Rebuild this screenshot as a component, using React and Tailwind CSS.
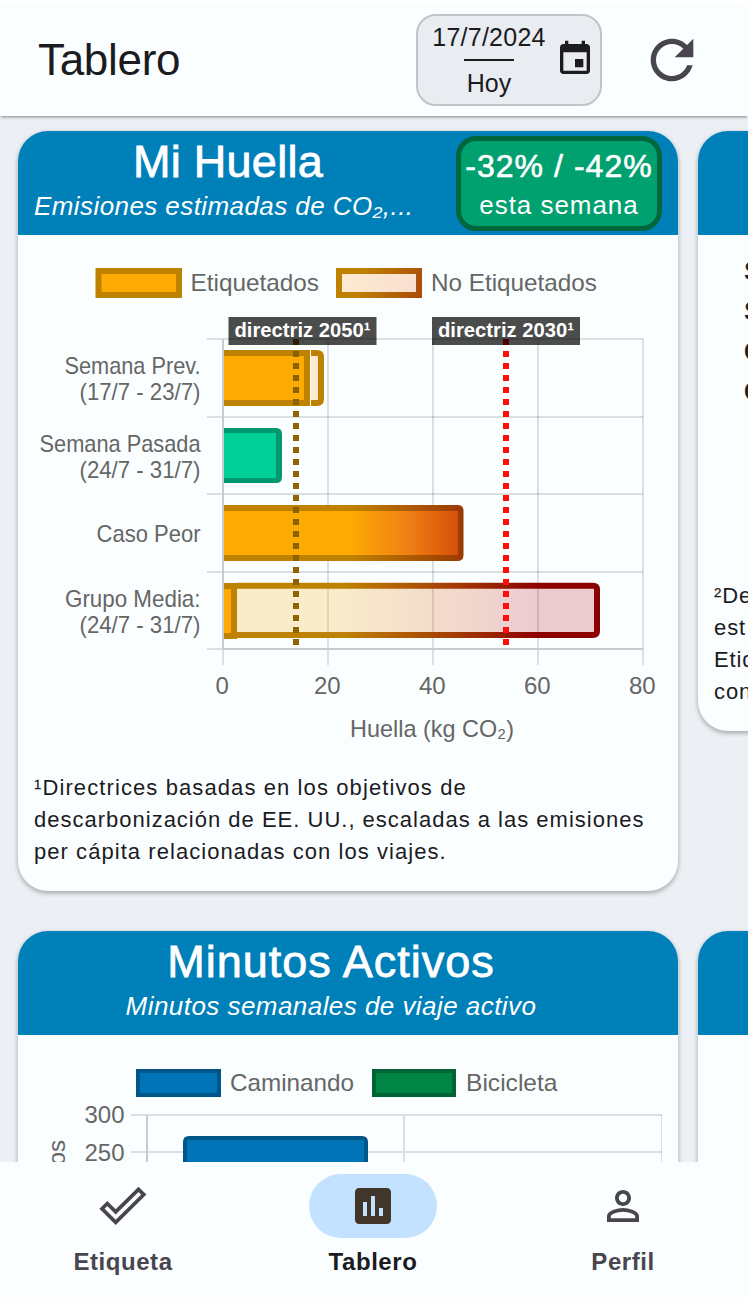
import React from "react";

const FONT = "font-['Liberation_Sans',Arial,sans-serif]";
const card = "shrink-0 overflow-hidden rounded-[30px] bg-[#fafeff] shadow-[0_2px_5px_rgba(0,0,0,0.32)]";

function T({ x, y, w, s = 24, anchor = "start", fill = "#666666", children, ...rest }) {
  return (
    <text x={x} y={y} fontSize={s} textLength={w} lengthAdjust="spacingAndGlyphs" textAnchor={anchor} fill={fill} {...rest}>
      {children}
    </text>
  );
}

function Header() {
  return (
    <header className="relative z-10 flex h-28 shrink-0 items-center bg-[#fafeff] pl-[38px] shadow-[0_2px_3px_-1px_rgba(0,0,0,0.45)]">
      <h1 className="w-[378px] text-[44px] leading-none tracking-[-0.3px] text-[#1c1b1f]">Tablero</h1>
      <button className="flex h-[92px] w-[186px] items-center rounded-[20px] border-2 border-[#c0c4c8] bg-[#e9ecf0] pl-3.5 text-[#1c1b1f]">
        <span className="flex w-[114px] flex-col items-center text-[25px] leading-[28px]">
          <span className="whitespace-nowrap tracking-[0.25px]">17/7/2024</span>
          <span className="mt-2 mb-2 h-0.5 w-[50px] bg-[#1c1b1f]" />
          <span>Hoy</span>
        </span>
        <svg className="-mt-0.5 ml-[9px]" width="40" height="40" viewBox="0 0 24 24" fill="currentColor">
          <path d="M17 12h-5v5h5v-5zM16 1v2H8V1H6v2H5c-1.110 0-1.990.9-1.990 2L3 19c0 1.100.890 2 2 2h14c1.100 0 2-.9 2-2V5c0-1.100-.9-2-2-2h-1V1h-2zm3 18H5V8h14v11z" />
        </svg>
      </button>
      <svg className="ml-[38px]" width="64" height="64" viewBox="0 0 24 24" fill="#49454f">
        <path d="M17.650 6.350C16.200 4.900 14.210 4 12 4c-4.420 0-7.990 3.580-7.990 8s3.570 8 7.990 8c3.730 0 6.840-2.550 7.730-6h-2.080c-.820 2.330-3.040 4-5.650 4-3.310 0-6-2.690-6-6s2.690-6 6-6c1.660 0 3.140.690 4.220 1.780L13 11h7V4l-2.350 2.350z" />
      </svg>
    </header>
  );
}

function FootprintChart() {
  const rows = [339, 417, 494, 572];
  return (
    <svg className="block" width="660" height="516" viewBox="18 235 660 516">
      <defs>
        <linearGradient id="legendFill"><stop offset="0" stopColor="#fdebd0" /><stop offset="1" stopColor="#f8dfd0" /></linearGradient>
        <linearGradient id="legendEdge" gradientUnits="userSpaceOnUse" x1="336" x2="422" y1="268" y2="298"><stop offset="0.3" stopColor="#bf8100" /><stop offset="1" stopColor="#a94a0b" /></linearGradient>
        <linearGradient id="worstFill" gradientUnits="userSpaceOnUse" x1="223" x2="463"><stop offset="0.53" stopColor="#fdab02" /><stop offset="0.76" stopColor="#f18215" /><stop offset="1" stopColor="#d24c06" /></linearGradient>
        <linearGradient id="worstEdge" gradientUnits="userSpaceOnUse" x1="223" x2="463"><stop offset="0.53" stopColor="#bf8100" /><stop offset="1" stopColor="#9b3904" /></linearGradient>
        <linearGradient id="groupFill" gradientUnits="userSpaceOnUse" x1="223" x2="600"><stop offset="0.3" stopColor="#f9ab0e" stopOpacity="0.22" /><stop offset="0.62" stopColor="#d65413" stopOpacity="0.22" /><stop offset="0.84" stopColor="#b80017" stopOpacity="0.2" /></linearGradient>
        <linearGradient id="groupEdge" gradientUnits="userSpaceOnUse" x1="223" x2="600"><stop offset="0.32" stopColor="#bf8100" /><stop offset="0.6" stopColor="#a53f04" /><stop offset="0.84" stopColor="#8b0000" /></linearGradient>
      </defs>
      <rect x="98.500" y="271" width="80.500" height="24" fill="#fdab02" stroke="#bf8100" strokeWidth="6" />
      <T x="190.500" y="291" w="128.500">Etiquetados</T>
      <rect x="339" y="271" width="80" height="24" fill="url(#legendFill)" stroke="url(#legendEdge)" strokeWidth="6" />
      <T x="431" y="291" w="166">No Etiquetados</T>

      <g stroke="#000" strokeOpacity="0.12" strokeWidth="2" fill="none">
        {rows.map((y) => <path key={y} d={`M207 ${y}H643`} />)}
        <path d="M207 649H223M223 649V665M328 339V665M433 339V665M538 339V665M643 339V665" />
      </g>
      <path d="M223 339V649H643" fill="none" stroke="#c8cacc" strokeWidth="2" />

      <path d="M311 353H317Q321 353 321 357V399Q321 403 317 403H311" fill="#fdebd0" stroke="#bf8100" strokeWidth="6" />
      <path d="M224 350H310V406H224Z" fill="#bf8100" /><path d="M224 356H304V400H224Z" fill="#fdab02" />
      <path d="M310.500 350V406" stroke="#fafeff" />
      <path d="M224 428H276Q282 428 282 434V477Q282 483 276 483H224Z" fill="#00996f" /><path d="M224 433H276V478H224Z" fill="#00cf97" />
      <path d="M224 505H457.500Q463.500 505 463.500 511V555Q463.500 561 457.500 561H224Z" fill="url(#worstEdge)" /><path d="M224 511H458V555H224Z" fill="url(#worstFill)" />
      <path d="M237 588H594V633H237Z" fill="url(#groupFill)" />
      <path d="M237 585.750H593Q597 585.750 597 589.750V631Q597 635 593 635H237" fill="none" stroke="url(#groupEdge)" strokeWidth="6" />
      <path d="M224 583H237V639H224Z" fill="#bf8100" /><path d="M224 589H231V633H224Z" fill="#fdab02" />

      <path d="M296 339V649" stroke="#8c6300" strokeWidth="6" strokeDasharray="6 6" />
      <path d="M506 339V649" stroke="#ff0d0a" strokeWidth="6" strokeDasharray="6 6" />
      <path d="M228.500 317H376.500V345H228.500ZM432 317H580V345H432Z" fill="#000" fillOpacity="0.7" />
      <T x="234.500" y="337" w="136" s="20" fill="#fff" fontWeight="700">directriz 2050¹</T>
      <T x="438" y="337" w="136" s="20" fill="#fff" fontWeight="700">directriz 2030¹</T>

      <T x="200.500" y="373.500" w="136" anchor="end">Semana Prev.</T>
      <T x="200.500" y="399.500" w="121" anchor="end">(17/7 - 23/7)</T>
      <T x="200.500" y="451.500" w="161" anchor="end">Semana Pasada</T>
      <T x="200.500" y="477.500" w="121" anchor="end">(24/7 - 31/7)</T>
      <T x="200.500" y="541.500" w="104" anchor="end">Caso Peor</T>
      <T x="200.500" y="606.500" w="135.500" anchor="end">Grupo Media:</T>
      <T x="200.500" y="632.500" w="121" anchor="end">(24/7 - 31/7)</T>
      {[0, 20, 40, 60, 80].map((n, i) => <T key={n} x={222.300 + i * 105} y="694" anchor="middle">{n}</T>)}
      <T x="350" y="737" w="164">Huella (kg CO₂)</T>
    </svg>
  );
}

function ActiveChart() {
  return (
    <svg className="block" width="660" height="160" viewBox="18 1035 660 160">
      <rect x="138" y="1071" width="81" height="24" fill="#0074b7" stroke="#005688" strokeWidth="4" />
      <T x="230" y="1091" w="124">Caminando</T>
      <rect x="374" y="1071" width="80" height="24" fill="#008545" stroke="#006335" strokeWidth="4" />
      <T x="466" y="1091" w="91.500">Bicicleta</T>
      <T x="124.500" y="1123" w="40" anchor="end">300</T>
      <T x="124.500" y="1161" w="40" anchor="end">250</T>
      <g stroke="#000" strokeOpacity="0.12">
        <path d="M131 1115H662M131 1152H662M404 1115V1195" strokeWidth="2" />
        <path d="M661.500 1115V1195" strokeWidth="1" />
      </g>
      <path d="M147 1115V1195" stroke="#c8cacc" strokeWidth="2" />
      <path d="M183 1195V1142Q183 1136 189 1136H362Q368 1136 368 1142V1195Z" fill="#005688" />
      <path d="M187 1195V1140H364V1195Z" fill="#0074b7" />
      <text transform="translate(65 1140) rotate(-90)" fontSize="24" textAnchor="end" fill="#666666">Minutos</text>
    </svg>
  );
}

function CardHeader({ title, subtitle, children }) {
  return (
    <div className="flex h-[104px] bg-[#0080b9] pl-4 text-white">
      <div className={children ? "w-[388px] shrink-0 text-center" : "w-[594px] text-center"}>
        {title}
        {subtitle}
      </div>
      {children}
    </div>
  );
}

const titleCls = "mt-2 text-[45px] leading-[46px] [-webkit-text-stroke:0.8px_white]";
const labelCls = "mt-2.5 text-[24px] leading-7 font-bold tracking-[0.55px]";

function NavItem({ label, active, children }) {
  return (
    <div className="flex w-[250px] shrink-0 flex-col items-center pt-3">
      <div className={active ? "flex h-16 w-32 items-center justify-center rounded-full bg-[#c2e2ff]" : "flex h-16 w-32 items-center justify-center"}>{children}</div>
      <span className={`${labelCls} ${active ? "text-[#1c1b1f]" : "text-[#49454f]"}`}>{label}</span>
    </div>
  );
}

export default function App() {
  return (
    <div className={`flex h-[1298px] w-[748px] flex-col overflow-hidden bg-white pt-1 ${FONT}`}>
      <Header />
      <main className="flex min-h-0 flex-1 flex-col gap-10 overflow-hidden bg-[#eceff4] pt-[15px] pl-[18px]">
        <div className="flex h-[760px] shrink-0 items-start gap-5">
          <section className={`${card} h-[760px] w-[660px]`}>
            <CardHeader
              title={<h2 className={`${titleCls} tracking-[0.25px]`}>Mi Huella</h2>}
              subtitle={<p className="mt-[7px] text-left text-[26px] leading-[28px] whitespace-nowrap italic tracking-[0.42px]">Emisiones estimadas de CO₂,...</p>}
            >
              <div className="mt-[5px] ml-[34px] flex h-[95px] w-[206px] flex-col items-center rounded-[20px] border-[5px] border-[#00663b] bg-[#00a16f] pt-[7px] whitespace-nowrap">
                <span className="text-[32px] leading-[36px] tracking-[1.05px] [-webkit-text-stroke:0.6px_white]">-32% / -42%</span>
                <span className="mt-1.5 text-[26px] leading-[30px] tracking-[0.95px]">esta semana</span>
              </div>
            </CardHeader>
            <FootprintChart />
            <p className="mt-[21px] flex flex-col pl-4 text-[22px] leading-8 whitespace-nowrap text-[#1c1b1f]">
              <span className="tracking-[1.1px]">¹Directrices basadas en los objetivos de</span>
              <span className="tracking-[1px]">descarbonización de EE. UU., escaladas a las emisiones</span>
              <span className="tracking-[1.05px]">per cápita relacionadas con los viajes.</span>
            </p>
          </section>
          <section className={`${card} flex h-[600px] w-[660px] flex-col`}>
            <CardHeader />
            <p className="mt-4 pl-[46px] text-[26px] leading-10 text-[#1c1b1f] [-webkit-text-stroke:0.7px_#1c1b1f]">
              S<br />S<br />C<br />C
            </p>
            <p className="mt-auto mb-[23px] pl-4 text-[22px] leading-8 tracking-[0.9px] text-[#1c1b1f]">
              ²De<br />est<br />Etiq<br />con
            </p>
          </section>
        </div>
        <div className="flex h-[760px] shrink-0 items-start gap-5">
          <section className={`${card} h-[760px] w-[660px]`}>
            <CardHeader
              title={<h2 className={`${titleCls} tracking-[1px]`}>Minutos Activos</h2>}
              subtitle={<p className="mt-[7px] text-[26px] leading-[28px] whitespace-nowrap italic tracking-[0.45px]">Minutos semanales de viaje activo</p>}
            />
            <ActiveChart />
          </section>
          <section className={`${card} h-[760px] w-[660px]`}><CardHeader /></section>
        </div>
      </main>
      <nav className="relative z-10 -ml-0.5 flex h-[136px] w-[750px] shrink-0 bg-[#fafeff]">
        <NavItem label="Etiqueta">
          <svg width="48" height="48" viewBox="0 0 48 48" fill="none" stroke="#49454f" strokeWidth="3.700">
            <path d="M3 26.700 8.300 21.500 16.700 29.900 39.500 7.400 44.800 12.600 16.700 40.400Z" />
          </svg>
        </NavItem>
        <NavItem label="Tablero" active>
          <svg width="48" height="48" viewBox="0 0 24 24" fill="#42362b">
            <path d="M19 3H5c-1.100 0-2 .9-2 2v14c0 1.100.9 2 2 2h14c1.100 0 2-.9 2-2V5c0-1.100-.9-2-2-2zM9 17H7v-7h2v7zm4 0h-2V7h2v10zm4 0h-2v-4h2v4z" />
          </svg>
        </NavItem>
        <NavItem label="Perfil">
          <svg width="48" height="48" viewBox="0 0 24 24" fill="#49454f">
            <path d="M12 5.900a2.100 2.100 0 1 1 0 4.200 2.100 2.100 0 0 1 0-4.200m0 9c2.970 0 6.100 1.460 6.100 2.100v1.100H5.900V17c0-.640 3.130-2.100 6.100-2.100M12 4C9.790 4 8 5.790 8 8s1.790 4 4 4 4-1.790 4-4-1.790-4-4-4zm0 9c-2.670 0-8 1.340-8 4v3h16v-3c0-2.660-5.330-4-8-4z" />
          </svg>
        </NavItem>
      </nav>
    </div>
  );
}
